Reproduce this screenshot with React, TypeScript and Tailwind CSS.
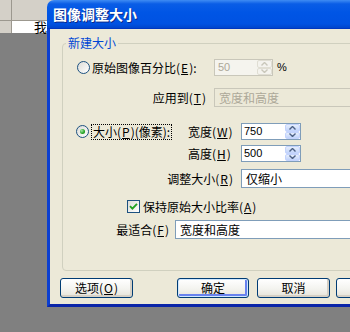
import React from "react";

function Arrow({ up, color }: { up?: boolean; color: string }) {
  return (
    <svg width="7" height="4" viewBox="0 0 7 4">
      {up ? (
        <path d="M0.5 3.5 L3.5 0.5 L6.5 3.5" stroke={color} strokeWidth="1.4" fill="none" />
      ) : (
        <path d="M0.5 0.5 L3.5 3.5 L6.5 0.5" stroke={color} strokeWidth="1.4" fill="none" />
      )}
    </svg>
  );
}

function SpinButtons({ disabled }: { disabled?: boolean }) {
  const c = disabled ? "#c9c7ba" : "#4d6185";
  return (
    <div className="flex flex-col w-[15px] h-full">
      <div
        className={
          disabled
            ? "flex-1 flex items-center justify-center rounded-[2px] border border-[#e0ded3] bg-[#f4f3ee]"
            : "flex-1 flex items-center justify-center rounded-[2px] border border-[#c3d3fd] bg-[linear-gradient(to_bottom,#e6eefc,#c1d3fb)]"
        }
      >
        <Arrow up color={c} />
      </div>
      <div
        className={
          disabled
            ? "flex-1 flex items-center justify-center rounded-[2px] border border-[#e0ded3] bg-[#f4f3ee]"
            : "flex-1 flex items-center justify-center rounded-[2px] border border-[#c3d3fd] bg-[linear-gradient(to_bottom,#e6eefc,#c1d3fb)]"
        }
      >
        <Arrow color={c} />
      </div>
    </div>
  );
}

function Radio({ checked }: { checked?: boolean }) {
  return (
    <div className="w-[13px] h-[13px] shrink-0 rounded-full border border-[#1c5180] bg-[linear-gradient(135deg,#dcdcd7,#ffffff)] flex items-center justify-center">
      {checked && (
        <div className="w-[5px] h-[5px] rounded-full bg-[radial-gradient(circle_at_35%_35%,#a6e8a6,#21a121_60%,#187a18)]" />
      )}
    </div>
  );
}

function Checkbox() {
  return (
    <div className="w-[13px] h-[13px] shrink-0 border border-[#1c5180] bg-[linear-gradient(135deg,#dcdcd7,#ffffff)] flex items-center justify-center">
      <svg width="9" height="9" viewBox="0 0 9 9">
        <path d="M1 4.2 L3.4 6.6 L8 1.8" stroke="#21a121" strokeWidth="1.9" fill="none" />
      </svg>
    </div>
  );
}

function Btn({ children, def, cls }: { children?: React.ReactNode; def?: boolean; cls: string }) {
  return (
    <div
      className={
        (def
          ? "shadow-[inset_0_0_0_1px_#cee7ff,inset_-1px_-1px_0_2px_#6982ee] "
          : "shadow-[inset_-1px_-1px_0_1px_#d6d0c5] ") +
        "h-[20px] shrink-0 flex items-center justify-center rounded-[3px] border border-[#003c74] bg-[linear-gradient(to_bottom,#ffffff,#f3f3ef_55%,#e6e3d8)] " +
        cls
      }
    >
      {children}
    </div>
  );
}

function U({ c }: { c: string }) {
  return <span className="px-[1px] underline underline-offset-[1px]">{c}</span>;
}

export default function App() {
  return (
    <div className="relative w-[350px] h-[332px] overflow-hidden bg-[#808080] font-['Noto_Sans_CJK_SC',sans-serif] text-[12px] leading-none text-black">
      {/* spreadsheet behind */}
      <div className="flex h-[21px] bg-[#d4d0c8] border-b border-[#9c988f]">
        <div className="w-[12px] border-r border-[#9c988f]" />
      </div>
      <div className="flex h-[12px]">
        <div className="w-[12px] bg-[#d4d0c8] border-r border-[#9c988f]" />
        <div className="w-[35px] bg-white flex justify-end items-end text-[13px] leading-[13px]">我</div>
      </div>

      {/* dialog window */}
      <div className="absolute left-[47px] top-0 w-[330px] h-[307px] flex flex-col">
        <div className="h-[29px] shrink-0 rounded-t-[7px] border-b border-[#0037c0] bg-[linear-gradient(to_bottom,#3f8cf3_0%,#0a5de6_14%,#0055e5_45%,#0052e2_85%,#0045cc_100%)] flex items-center pl-[6px]">
          <span className="text-white font-bold text-[14px] [text-shadow:1px_1px_0_#0c2a8a]">图像调整大小</span>
        </div>
        <div className="flex-1 flex flex-col bg-[#ece9d8] border-l-[3px] border-l-[#0b3fd0] border-b-[3px] border-b-[#0a25a8]">
          {/* group box */}
          <div className="relative ml-[12px] mt-[14px] h-[228px] w-[300px] border border-[#d0d0bf] rounded-[4px] flex flex-col">
            <span className="absolute left-[3px] top-[-7px] px-[2px] bg-[#ece9d8] text-[#0046d5]">新建大小</span>

            {/* row 1 */}
            <div className="h-[17px] mt-[15px] flex items-center pl-[14px]">
              <Radio />
              <span className="ml-[2px] w-[122px]">
                原始图像百分比(<U c="E" />):
              </span>
              <div className="w-[59px] h-[17px] flex border border-[#c9c7ba] bg-[#f5f4ee]">
                <span className="flex-1 flex items-center pl-[3px] text-[#aca899] font-['Liberation_Sans',sans-serif] text-[11px]">50</span>
                <SpinButtons disabled />
              </div>
              <span className="ml-[4px] font-['Liberation_Sans',sans-serif] text-[11px]">%</span>
            </div>

            {/* row 2 */}
            <div className="h-[19px] mt-[12px] flex items-center">
              <span className="w-[151px] text-right pr-[8px]">
                应用到(<U c="T" />)
              </span>
              <div className="flex-1 h-[19px] mr-[-20px] flex items-center pl-[4px] border border-[#c9c7ba] bg-[#ece9d8] text-[#aca899]">
                宽度和高度
              </div>
            </div>

            {/* row 3 */}
            <div className="h-[17px] mt-[16px] flex items-center pl-[13px]">
              <Radio checked />
              <span className="ml-[2px] w-[97px] flex">
                <span className="border border-dotted border-black px-[1px] py-[1px]">
                  大小(<U c="P" />)(像素):
                </span>
              </span>
              <span className="w-[53px]">
                宽度(<U c="W" />)
              </span>
              <div className="w-[60px] h-[17px] flex border border-[#7f9db9] bg-white">
                <span className="flex-1 flex items-center pl-[2px] font-['Liberation_Sans',sans-serif] text-[11px]">750</span>
                <SpinButtons />
              </div>
            </div>

            {/* row 4 */}
            <div className="h-[17px] mt-[5px] flex items-center pl-[125px]">
              <span className="w-[53px]">
                高度(<U c="H" />)
              </span>
              <div className="w-[60px] h-[17px] flex border border-[#7f9db9] bg-white">
                <span className="flex-1 flex items-center pl-[2px] font-['Liberation_Sans',sans-serif] text-[11px]">500</span>
                <SpinButtons />
              </div>
            </div>

            {/* row 5 */}
            <div className="h-[19px] mt-[7px] flex items-center">
              <span className="w-[178px] text-right pr-[8px]">
                调整大小(<U c="R" />)
              </span>
              <div className="flex-1 h-[19px] mr-[-20px] flex items-center pl-[4px] border border-[#7f9db9] bg-white">
                仅缩小
              </div>
            </div>

            {/* row 6 */}
            <div className="h-[13px] mt-[12px] flex items-center pl-[64px]">
              <Checkbox />
              <span className="ml-[3px]">
                保持原始大小比率(<U c="A" />)
              </span>
            </div>

            {/* row 7 */}
            <div className="h-[19px] mt-[7px] flex items-center">
              <span className="w-[112px] text-right pr-[6px]">
                最适合(<U c="F" />)
              </span>
              <div className="flex-1 h-[19px] mr-[-20px] flex items-center pl-[4px] border border-[#7f9db9] bg-white">
                宽度和高度
              </div>
            </div>
          </div>

          {/* buttons */}
          <div className="mt-[7px] flex pl-[10px]">
            <Btn cls="w-[73px]">
              选项(<U c="O" />)
            </Btn>
            <Btn def cls="w-[72px] ml-[44px]">
              确定
            </Btn>
            <Btn cls="w-[73px] ml-[8px]">取消</Btn>
            <Btn cls="w-[73px] ml-[6px]" />
          </div>
        </div>
      </div>
    </div>
  );
}
